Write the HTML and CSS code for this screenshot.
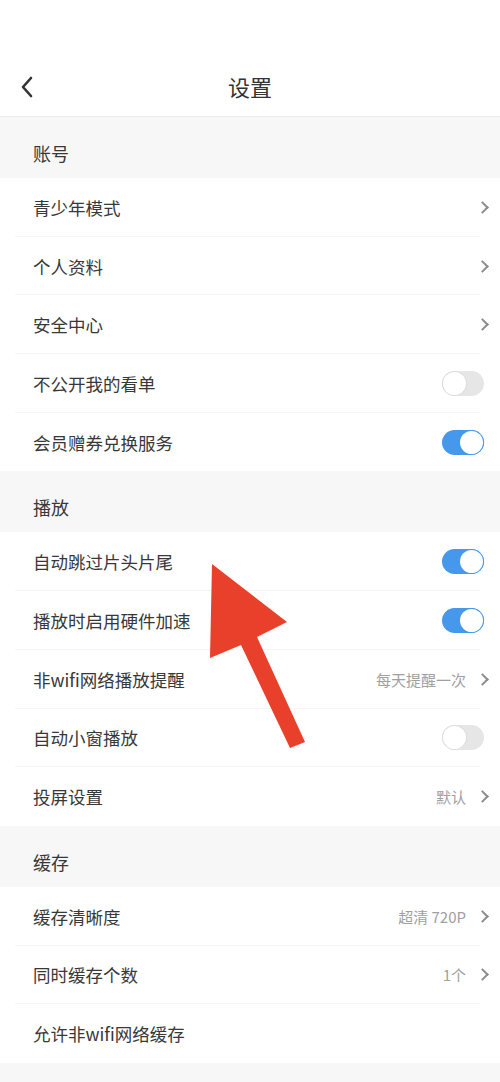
FILE: index.html
```html
<!DOCTYPE html>
<html lang="zh-CN">
<head>
    <meta charset="UTF-8">
    <meta name="viewport" content="width=device-width, initial-scale=1.0">
    <title>设置</title>
    <link rel="stylesheet" href="styles.css">
</head>
<body>
    <div class="page">
        <div class="status"></div>

        <div class="nav">
            <svg class="back" width="14" height="22" viewBox="0 0 14 22">
                <path d="M11 2 L3 11 L11 20" fill="none" stroke="#333" stroke-width="2.6" stroke-linecap="round" stroke-linejoin="round"/>
            </svg>
            <div class="title">设置</div>
        </div>

        <!-- 账号 -->
        <div class="group-title">账号</div>
        <ul class="list">
            <li><span class="label">青少年模式</span><span class="right"><i class="arrow"></i></span></li>
            <li><span class="label">个人资料</span><span class="right"><i class="arrow"></i></span></li>
            <li><span class="label">安全中心</span><span class="right"><i class="arrow"></i></span></li>
            <li><span class="label">不公开我的看单</span><span class="right"><span class="switch"></span></span></li>
            <li><span class="label">会员赠券兑换服务</span><span class="right"><span class="switch on"></span></span></li>
        </ul>

        <!-- 播放 -->
        <div class="group-title">播放</div>
        <ul class="list">
            <li><span class="label">自动跳过片头片尾</span><span class="right"><span class="switch on"></span></span></li>
            <li><span class="label">播放时启用硬件加速</span><span class="right"><span class="switch on"></span></span></li>
            <li><span class="label">非wifi网络播放提醒</span><span class="right"><span class="value">每天提醒一次</span><i class="arrow"></i></span></li>
            <li><span class="label">自动小窗播放</span><span class="right"><span class="switch"></span></span></li>
            <li><span class="label">投屏设置</span><span class="right"><span class="value">默认</span><i class="arrow"></i></span></li>
        </ul>

        <!-- 缓存 -->
        <div class="group-title">缓存</div>
        <ul class="list">
            <li><span class="label">缓存清晰度</span><span class="right"><span class="value">超清 720P</span><i class="arrow"></i></span></li>
            <li><span class="label">同时缓存个数</span><span class="right"><span class="value">1个</span><i class="arrow"></i></span></li>
            <li><span class="label">允许非wifi网络缓存</span><span class="right"></span></li>
        </ul>
        <div class="bottom"></div>

        <!-- 标注箭头 -->
        <svg class="mark" width="500" height="1082" viewBox="0 0 500 1082">
            <polygon points="212,564 287,622 257,637 305,742 290,748 241,645 210,658" fill="#e8402a"/>
        </svg>
    </div>
</body>
</html>
```

FILE: styles.css
```css
*{
    margin: 0;
    padding: 0;
    box-sizing: border-box;
}

ul{
    list-style-type: none;
}

body{
    background: #ffffff;
    font-family: "Noto Sans CJK SC", "Noto Sans", sans-serif;
    color: #333333;
}

.page{
    width: 500px;
    height: 1082px;
    overflow: hidden;
    position: relative;
    background: #f7f7f7;
}

.status{
    height: 57px;
    background: #ffffff;
}

.nav{
    height: 60px;
    background: #ffffff;
    border-bottom: 1px solid #ececec;
    display: flex;
    align-items: center;
    justify-content: center;
    position: relative;
    padding-bottom: 2px;
}

.nav .back{
    position: absolute;
    left: 20px;
    top: 19px;
}

.nav .title{
    font-size: 22px;
    line-height: 30px;
    color: #333333;
}

.group-title{
    height: 61px;
    padding: 11px 0 0 33px;
    display: flex;
    align-items: center;
    font-size: 18px;
    color: #383838;
    background: #f7f7f7;
}

.list{
    background: #ffffff;
}

.list li{
    height: 58.7px;
    padding: 0 12px 0 33px;
    display: flex;
    align-items: center;
    justify-content: space-between;
    position: relative;
    font-size: 17.5px;
    color: #383838;
}

.list li::after{
    content: "";
    position: absolute;
    left: 15px;
    right: 20px;
    bottom: 0;
    height: 1px;
    background: #f5f5f5;
}

.list li:last-child::after{
    display: none;
}

.right{
    display: flex;
    align-items: center;
}

.value{
    font-size: 15px;
    color: #a0a0a0;
    margin-right: 12px;
}

.arrow{
    display: block;
    width: 9px;
    height: 9px;
    border-top: 2px solid #8c8c8c;
    border-right: 2px solid #8c8c8c;
    transform: rotate(45deg);
    margin-right: 1px;
}

.switch{
    display: block;
    width: 42px;
    height: 25px;
    border-radius: 13px;
    background: #e6e6e6;
    position: relative;
    margin-right: 4px;
}

.switch::before{
    content: "";
    position: absolute;
    left: 1px;
    top: 1px;
    width: 23px;
    height: 23px;
    border-radius: 50%;
    background: #ffffff;
    box-shadow: 0 0 0 1px #dddddd;
}

.switch.on{
    background: #4598ec;
}

.switch.on::before{
    left: 18px;
    box-shadow: 0 0 0 1px #4598ec;
}

.bottom{
    height: 19px;
    background: #f7f7f7;
}

.mark{
    position: absolute;
    left: 0;
    top: 0;
    pointer-events: none;
}
```
